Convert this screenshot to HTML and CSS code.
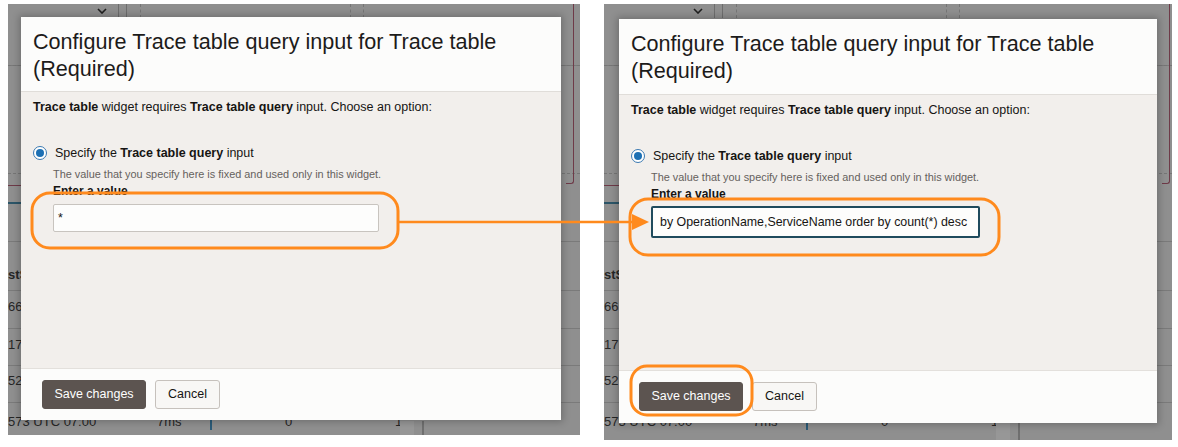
FILE: index.html
```html
<!DOCTYPE html>
<html>
<head>
<meta charset="utf-8">
<title>Configure Trace table query input</title>
<link rel="stylesheet" href="styles.css">
</head>
<body>
<div class="page">
  <div class="shot shot-a">
    <div class="under">
      <svg class="u-chev" viewBox="0 0 10 6" width="10" height="6"><path d="M1 1 L5 5 L9 1" fill="none" stroke="#1f1f1f" stroke-width="1.6"/></svg>
      <span class="u-vline v1"></span><span class="u-vline v2"></span>
      <span class="u-vdash d1"></span><span class="u-vdash d2"></span><span class="u-vdash d3"></span>
      <span class="u-hline h-top"></span>
      <span class="u-hdash hd1"></span><span class="u-hdash hd2"></span>
      <span class="u-red-v"></span><span class="u-red-h"></span>
      <span class="u-teal"></span>
      <span class="u-hline h-head"></span>
      <span class="u-text t-head">stS</span>
      <span class="u-hline r1"></span><span class="u-hline r2"></span><span class="u-hline r3"></span><span class="u-hline r4"></span>
      <span class="u-text t1">66</span><span class="u-text t2">17</span><span class="u-text t3">52</span><span class="u-text t4">573 UTC 07:00</span>
      <span class="u-text t4b">7ms</span><span class="u-bar"></span><span class="u-text t4c">0</span><span class="u-text t4d">1</span>
      <span class="u-col c1"></span><span class="u-col c2"></span>
    </div>
    <div class="dialog">
      <div class="dlg-head"><h1 class="dlg-title">Configure Trace table query input for Trace table (Required)</h1></div>
      <div class="dlg-body">
        <p class="intro"><b>Trace table</b> widget requires <b>Trace table query</b> input. Choose an option:</p>
        <div class="radio-row"><span class="radio"></span><span class="radio-label">Specify the <b>Trace table query</b> input</span></div>
        <div class="field">
          <div class="help">The value that you specify here is fixed and used only in this widget.</div>
          <div class="field-label">Enter a value</div>
          <div class="input">*</div>
        </div>
      </div>
      <div class="dlg-foot">
        <button class="btn btn-primary">Save changes</button>
        <button class="btn btn-secondary">Cancel</button>
      </div>
    </div>
  </div>

  <div class="shot shot-b">
    <div class="under">
      <svg class="u-chev" viewBox="0 0 10 6" width="10" height="6"><path d="M1 1 L5 5 L9 1" fill="none" stroke="#1f1f1f" stroke-width="1.6"/></svg>
      <span class="u-vline v1"></span><span class="u-vline v2"></span>
      <span class="u-vdash d1"></span><span class="u-vdash d2"></span><span class="u-vdash d3"></span>
      <span class="u-hline h-top"></span>
      <span class="u-hdash hd1"></span><span class="u-hdash hd2"></span>
      <span class="u-red-v"></span><span class="u-red-h"></span>
      <span class="u-teal"></span>
      <span class="u-hline h-head"></span>
      <span class="u-text t-head">stS</span>
      <span class="u-hline r1"></span><span class="u-hline r2"></span><span class="u-hline r3"></span><span class="u-hline r4"></span>
      <span class="u-text t1">66</span><span class="u-text t2">17</span><span class="u-text t3">52</span><span class="u-text t4">573 UTC 07:00</span>
      <span class="u-text t4b">7ms</span><span class="u-bar"></span><span class="u-text t4c">0</span><span class="u-text t4d">1</span>
      <span class="u-col c1"></span><span class="u-col c2"></span>
    </div>
    <div class="dialog">
      <div class="dlg-head"><h1 class="dlg-title">Configure Trace table query input for Trace table (Required)</h1></div>
      <div class="dlg-body">
        <p class="intro"><b>Trace table</b> widget requires <b>Trace table query</b> input. Choose an option:</p>
        <div class="radio-row"><span class="radio"></span><span class="radio-label">Specify the <b>Trace table query</b> input</span></div>
        <div class="field">
          <div class="help">The value that you specify here is fixed and used only in this widget.</div>
          <div class="field-label">Enter a value</div>
          <div class="input input-focus">by OperationName,ServiceName order by count(*) desc</div>
        </div>
      </div>
      <div class="dlg-foot">
        <button class="btn btn-primary">Save changes</button>
        <button class="btn btn-secondary">Cancel</button>
      </div>
    </div>
  </div>
</div>

<svg class="annot" width="1178" height="447" viewBox="0 0 1178 447">
  <g fill="none" stroke="#ff8a1d" stroke-width="3">
    <rect x="32" y="193" width="366" height="55" rx="18"/>
    <rect x="630" y="199" width="369" height="56" rx="18"/>
    <rect x="631" y="366" width="121" height="49" rx="16"/>
    <line x1="398" y1="222" x2="636" y2="222" stroke-width="2.6"/>
  </g>
  <polygon points="632,214 649,222 632,230" fill="#ff8a1d"/>
</svg>
</body>
</html>
```

FILE: styles.css
```css
* { box-sizing: border-box; margin: 0; padding: 0; }
html, body { background: #ffffff; }
body {
  font-family: "Liberation Sans", Arial, sans-serif;
  color: #161513;
  width: 1178px;
  height: 447px;
  overflow: hidden;
  position: relative;
}
.page {
  display: flex;
  align-items: flex-start;
  gap: 24px;
  padding: 4px 0 0 8px;
}
.shot {
  position: relative;
  flex: none;
  background: #8f8f8f;
  overflow: hidden;
}
.shot-a { width: 572px; height: 431px; }
.shot-b { width: 568px; height: 436px; }

/* dimmed page behind the dialog */
.under { position: absolute; inset: 0; }
.u-chev { position: absolute; left: 89px; top: 4px; }
.u-vline { position: absolute; top: 0; width: 1px; height: 14px; background: #6e6e6e; }
.u-vline.v1 { left: 110px; }
.u-vline.v2 { left: 118px; }
.u-vdash { position: absolute; top: 0; height: 14px; border-left: 1px dashed #767676; }
.u-vdash.d1 { left: 132px; }
.u-vdash.d2 { left: 342px; }
.u-vdash.d3 { left: 355px; }
.u-hline { position: absolute; left: 0; right: 0; height: 1px; background: #7a7a7a; }
.u-hline.h-top { top: 61px; }
.u-hline.h-head { top: 237px; }
.u-hline.r1 { top: 286px; }
.u-hline.r2 { top: 324px; }
.u-hline.r3 { top: 361px; }
.u-hline.r4 { top: 398px; }
.u-hdash { position: absolute; left: 0; right: 0; border-top: 1px dashed #767676; }
.u-hdash.hd1 { top: 61px; }
.u-hdash.hd2 { top: 169px; }
.u-red-v {
  position: absolute; left: 558px; top: 0; width: 8px; height: 180px;
  border-right: 1px solid #6e3a48; border-bottom: 1px solid #6e3a48;
  border-bottom-right-radius: 3px;
}
.u-red-h { position: absolute; left: 0; width: 20px; top: 181px; height: 1px; background: #6e3a48; }
.u-teal { position: absolute; left: 0; width: 20px; top: 198px; height: 2px; background: #2c5568; }
.u-text {
  position: absolute; font-size: 13px; line-height: 16px; color: #262626; white-space: nowrap;
}
.u-text.t-head { left: 0; top: 263px; font-weight: 700; }
.u-text.t1 { left: 0; top: 295px; }
.u-text.t2 { left: 0; top: 333px; }
.u-text.t3 { left: 0; top: 369px; }
.u-text.t4 { left: 0; top: 410px; }
.u-text.t4b { left: 149px; top: 410px; }
.u-text.t4c { left: 277px; top: 410px; }
.u-text.t4d { left: 387px; top: 410px; }
.u-bar { position: absolute; left: 202px; top: 412px; width: 2px; height: 14px; background: #2b5b78; }
.u-col { position: absolute; top: 417px; bottom: 0; }
.u-col.c1 { left: 392px; width: 14px; background: #979797; }
.u-col.c2 { left: 414px; width: 2px; background: #6f6f6f; }

/* dialog */
.dialog {
  position: absolute;
  display: flex;
  flex-direction: column;
  background: #fcfcfb;
  box-shadow: 0 0 7px 2px rgba(0, 0, 0, 0.22);
}
.shot-a .dialog { left: 13px; top: 13px; width: 540px; height: 403px; }
.shot-b .dialog { left: 15px; top: 15px; width: 538px; height: 404px; }

.dlg-head {
  flex: none;
  height: 75px;
  padding: 11px 12px 0;
  border-bottom: 1px solid #e0ddd9;
  background: #fcfcfb;
}
.shot-b .dlg-head { height: 76px; }
.dlg-title {
  font-size: 21.6px;
  line-height: 27px;
  font-weight: 400;
  color: #1c1b1a;
}
.dlg-body {
  flex: 1;
  background: #f2efec;
  padding: 7px 12px 0;
}
.intro { font-size: 12.5px; line-height: 16px; }
.intro b, .radio-label b { font-weight: 700; }
.radio-row {
  display: flex;
  align-items: center;
  gap: 8px;
  margin-top: 30px;
  font-size: 12.5px;
  line-height: 16px;
}
.radio {
  flex: none;
  width: 14px;
  height: 14px;
  border-radius: 50%;
  border: 1px solid #3b79b1;
  background: #ffffff;
  display: flex;
  align-items: center;
  justify-content: center;
}
.radio::after {
  content: "";
  width: 8px;
  height: 8px;
  border-radius: 50%;
  background: #1d70b4;
}
.field { padding-left: 20px; }
.help {
  margin-top: 6px;
  font-size: 10.9px;
  line-height: 14px;
  color: #65615d;
}
.field-label {
  margin-top: 2px;
  font-size: 12px;
  line-height: 16px;
  font-weight: 700;
}
.input {
  margin-top: 5px;
  width: 326px;
  height: 28px;
  border: 1px solid #c8c4bf;
  border-radius: 2px;
  background: #fdfdfc;
  font-size: 12.4px;
  line-height: 26px;
  padding: 0 4px;
  white-space: nowrap;
  overflow: hidden;
}
.input-focus {
  margin-top: 4px;
  width: 329px;
  height: 32px;
  border: 2px solid #1f4b5d;
  line-height: 28px;
  padding: 0 7px;
}
.dlg-foot {
  flex: none;
  height: 52px;
  display: flex;
  align-items: flex-start;
  gap: 9px;
  padding: 11px 21px 0;
  border-top: 1px solid #e3e0dc;
  background: #fcfcfb;
}
.shot-b .dlg-foot { height: 53px; padding-left: 20px; }
.btn {
  height: 29px;
  border-radius: 3px;
  font-family: "Liberation Sans", Arial, sans-serif;
  font-size: 12.5px;
  line-height: 27px;
  padding: 0;
  white-space: nowrap;
  text-align: center;
  cursor: pointer;
}
.btn-primary {
  width: 104px;
  background: #5c5450;
  border: 1px solid #5c5450;
  color: #ffffff;
}
.btn-secondary {
  width: 65px;
  background: #f8f7f5;
  border: 1px solid #c6c1bc;
  color: #161513;
}

.annot {
  position: absolute;
  left: 0;
  top: 0;
  pointer-events: none;
}
```
